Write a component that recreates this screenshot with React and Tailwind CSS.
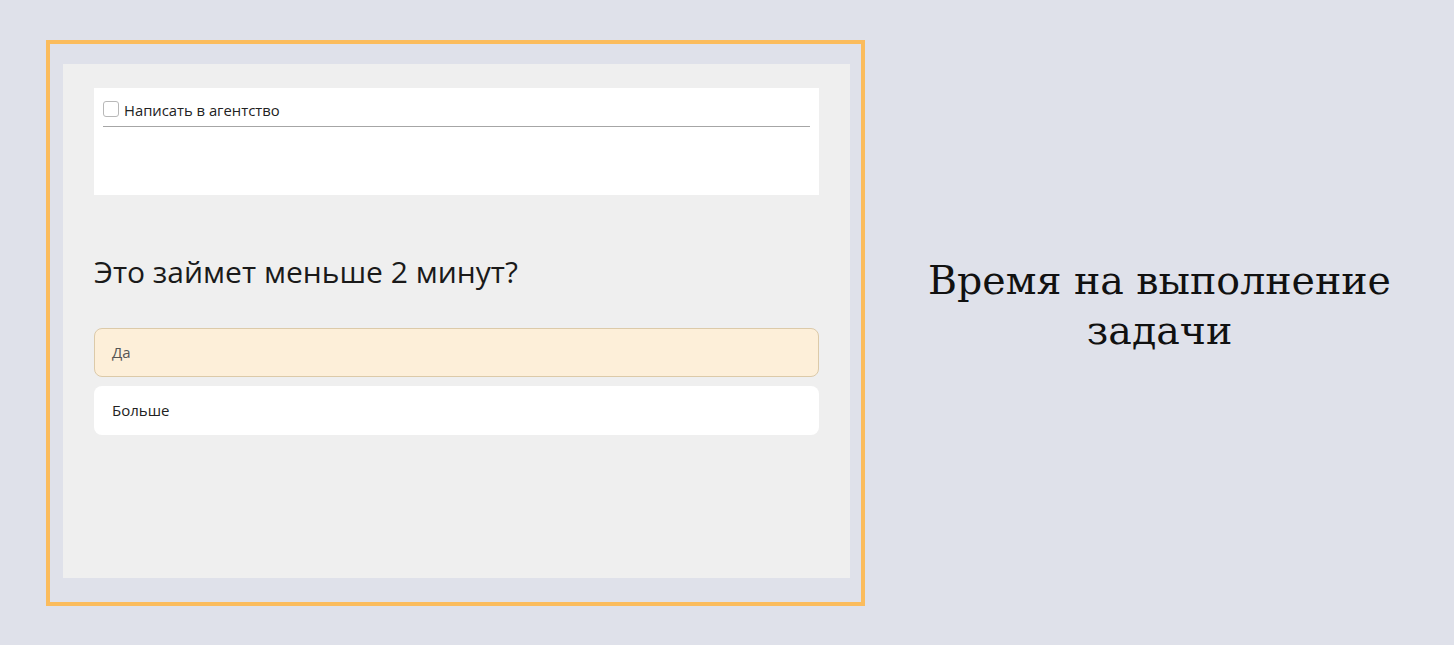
export default function App() {
  return (
    <div className="w-full h-[645px] bg-[#dfe1ea] flex items-center pl-[46px]">
      {/* frame */}
      <div className="w-[819px] h-[566px] border-4 border-[#fbbc5d] pl-[13px] pr-[11px] pt-[20px] pb-[24px]">
        <div
          className="w-full h-full bg-[#efefef] px-[31px] pt-[24px]"
          style={{ fontFamily: '"Open Sans", "Noto Sans", sans-serif' }}
        >
          <div className="bg-white h-[107px] px-[9px] pt-[13px]">
            <label className="flex items-center gap-[5px] h-[17px]">
              <span className="w-4 h-4 rounded-[3px] border border-[#b8b8b8] bg-white shrink-0" />
              <span className="text-[14.8px] text-[#222] leading-none mt-[2px]">Написать в агентство</span>
            </label>
            <div className="mt-[8px] h-px bg-[#a6a6a6]" />
          </div>

          <h2 className="mt-[57px] text-[30px] leading-[40px] text-[#1a1a1a]">
            Это займет меньше 2 минут?
          </h2>

          <div className="mt-[36px] flex flex-col gap-[9px]">
            <div className="h-[49px] rounded-lg bg-[#fdefd9] border border-[#dccaa9] flex items-center pl-[17px] text-[15px] text-[#555]">
              Да
            </div>
            <div className="h-[49px] rounded-lg bg-white flex items-center pl-[18px] text-[15px] text-[#222]">
              Больше
            </div>
          </div>
        </div>
      </div>

      {/* caption */}
      <div className="flex-1 text-center -mt-[35px]">
        <p
          className="text-[39.5px] leading-[50px] text-[#111]"
          style={{ fontFamily: '"DejaVu Serif", "Liberation Serif", serif' }}
        >
          Время на выполнение
          <br />
          задачи
        </p>
      </div>
    </div>
  );
}
